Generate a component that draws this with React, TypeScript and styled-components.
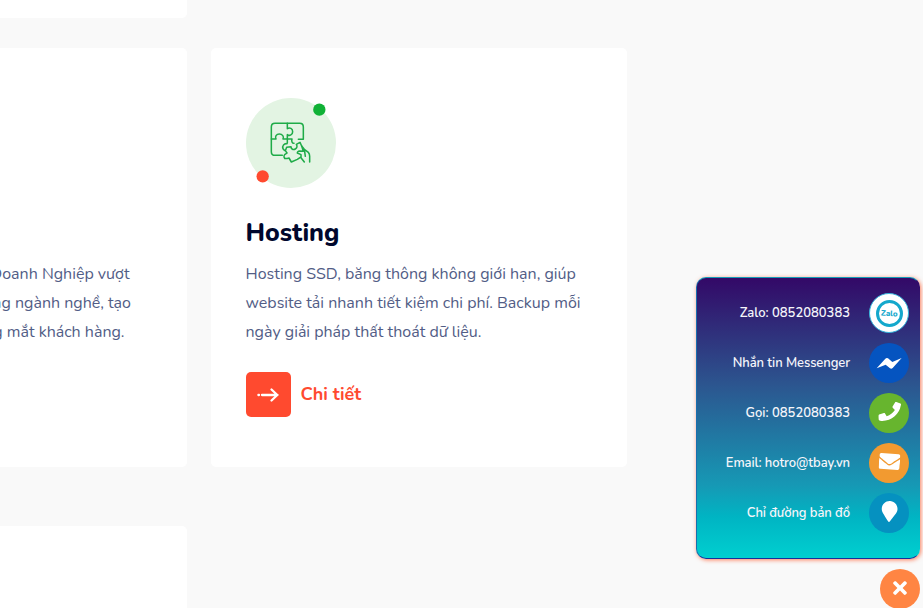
import React from "react";
import styled, { createGlobalStyle } from "styled-components";
import { FaEnvelope, FaMapMarker, FaPhone, FaTimes } from "react-icons/fa";

const GlobalStyle = createGlobalStyle`
  * { box-sizing: border-box; }
  body {
    margin: 0;
    background: #f9f9f9;
    font-family: "Nunito", "Open Sans", sans-serif;
  }
  h3, p { margin: 0; }
`;

const Page = styled.div`
  position: relative;
  display: flex;
  gap: 24px;
  height: 608px;
  overflow: hidden;
  background: #f9f9f9;
`;

const Column = styled.div`
  display: flex;
  flex-direction: column;
  flex: none;
`;

const Card = styled.article<{ $height: number; $width?: number; $mt?: number; $corners?: string }>`
  flex: none;
  width: ${(p) => p.$width ?? 187}px;
  height: ${(p) => p.$height}px;
  margin-top: ${(p) => p.$mt ?? 0}px;
  border-radius: ${(p) => p.$corners ?? "0 5px 5px 0"};
  background: #fff;
`;

const ServiceCard = styled(Card)`
  padding: 50px 35px 0;
`;

const CutOffCard = styled(Card)`
  display: flex;
  flex-direction: column;
  padding-top: 212px;
  overflow: hidden;
`;

const Badge = styled.svg`
  display: block;
  width: 90px;
  height: 90px;
`;

const Title = styled.h3`
  margin: 29px 0 0 -0.5px;
  font-size: 25px;
  font-weight: 800;
  line-height: 32px;
  color: #00072d;
`;

const Description = styled.p`
  margin: 11px 0 0 -0.5px;
  font-size: 16px;
  line-height: 29px;
  white-space: nowrap;
  color: #525d86;
`;

const TrailingLine = styled.p<{ $end: number }>`
  display: flex;
  justify-content: flex-end;
  width: ${(p) => p.$end}px;
  font-size: 16px;
  line-height: 29px;
  white-space: nowrap;
  color: #525d86;
`;

const DetailLink = styled.a`
  display: flex;
  align-items: center;
  gap: 9.5px;
  margin-top: 25px;
  font-size: 18px;
  font-weight: 700;
  line-height: 24px;
  color: #ff4a2f;
`;

const DetailLabel = styled.span`
  padding-bottom: 2px;
`;

const ArrowBox = styled.span`
  display: grid;
  place-items: center;
  width: 45px;
  height: 45px;
  border-radius: 5px;
  background: #ff4a2f;
`;

const ContactPanel = styled.aside`
  position: absolute;
  top: 277px;
  right: 3px;
  display: flex;
  flex-direction: column;
  gap: 10px;
  width: 224px;
  height: 282px;
  padding: 15px 10px 0 0;
  border: 1px solid transparent;
  border-radius: 10px;
  background: linear-gradient(to top, #00d0d0 0%, #00b4c3 15%, #1699b5 26%, #2c558f 62%, #330867 100%) border-box;
  border-top-color: #159bb8;
  border-left-color: #1a6fae;
  border-bottom-color: #17309a;
  box-shadow: 1px 1px 4px rgba(255, 95, 50, 0.8);
`;

const ContactRow = styled.a<{ $tracking?: number }>`
  display: flex;
  align-items: center;
  justify-content: flex-end;
  gap: 19px;
  height: 40px;
  font-size: 13px;
  font-weight: 600;
  letter-spacing: ${(p) => p.$tracking ?? 0}px;
  white-space: nowrap;
  color: #f5f5fa;
`;

const IconDisc = styled.span<{ $color: string; $tilt?: number; $size?: number; $lift?: number }>`
  display: grid;
  place-items: center;
  flex: none;
  width: 40px;
  height: 40px;
  border-radius: 50%;
  color: #fff;
  background: ${(p) => p.$color};

  > svg {
    width: ${(p) => p.$size ?? 40}px;
    height: ${(p) => p.$size ?? 40}px;
    transform: translateY(${(p) => -(p.$lift ?? 0)}px) rotate(${(p) => p.$tilt ?? 0}deg);
  }
`;

const ZaloDisc = styled.span`
  display: grid;
  place-items: center;
  flex: none;
  width: 40px;
  height: 40px;
  border: 1px solid #35b5dc;
  border-radius: 50%;
  background: #fff;
`;

const ZaloRing = styled.span`
  display: grid;
  place-items: center;
  width: 27px;
  height: 27px;
  border: 3px solid #14a8cc;
  border-radius: 50%;
  font-size: 8px;
  font-weight: 800;
  letter-spacing: 0;
  line-height: 10px;
  color: #14a8cc;
`;

const ZaloWord = styled.span`
  padding-top: 1px;
  transform: rotate(4deg);
`;

const CloseButton = styled.button`
  position: absolute;
  top: 569px;
  right: 3px;
  display: grid;
  place-items: center;
  width: 40px;
  height: 40px;
  padding: 0 0 2px;
  border: 0;
  border-radius: 50%;
  font-size: 20px;
  color: #fff;
  background: #ff8543;
`;

function PuzzleBadge() {
  return (
    <Badge viewBox="30 30 270 270">
      <circle cx="165" cy="165" r="135" fill="#e3f4e3" />
      <g fill="none" stroke="#1fab48" strokeWidth="4.6" strokeLinejoin="round" strokeLinecap="round">
        <path d="M139 202H117Q106 202 106 191V117Q106 106 117 106H191Q202 106 202 117V154H187" />
        <path d="M154 106V122C161 117 170 122 170 131C170 140 161 145 154 140V153H141C145 146 139 138 130 138C121 138 116 146 120 153H106" />
        <path d="M154 153H168C166 159 168 166 174 166M154 153V165" />
        <path d="M153 167C144 166 138 173 141 182L145 187M146 211C142 206 144 199 150 197L153 195L148 188L152 178L165 176C165 183 172 187 178 183C184 180 184 174 181 169L192 163L197 174" />
        <path d="M146 211C150 213 155 211 159 210L166 222L184 214L193 208" />
        <path d="M197 174L205 184L217 193Q221 197 221 205V222M197 174L202 190L191 189Q184 190 184 195L195 200V209L205 222M205 184L208 205" />
      </g>
      <circle cx="250" cy="65" r="18.5" fill="#10b136" />
      <circle cx="80" cy="265" r="18.5" fill="#ff4a2f" />
    </Badge>
  );
}

function Arrow() {
  return (
    <svg width="24" height="16" viewBox="0 0 24 16" fill="none" stroke="#fff" strokeWidth="2.3" strokeLinecap="round" strokeLinejoin="round">
      <path d="M5 8H20.5M14.5 2.5L20.3 8L14.5 13.5" />
      <path d="M1.4 8H2" />
    </svg>
  );
}

function MessengerBolt() {
  return (
    <svg viewBox="27 174 120 120" fill="currentColor">
      <path d="M50 250L76 221Q80 217 84 220L97 231L125 219L98 249Q94 253 90 250L77 239Z" />
    </svg>
  );
}

export default function App() {
  return (
    <>
      <GlobalStyle />
      <Page>
        <Column>
          <Card $height={18} $corners="0 0 5px 0" />
          <CutOffCard $height={419} $mt={30}>
            <TrailingLine $end={129.5}>Doanh Nghiệp vượt</TrailingLine>
            <TrailingLine $end={131}>ng ngành nghề, tạo</TrailingLine>
            <TrailingLine $end={124.5}>g mắt khách hàng.</TrailingLine>
          </CutOffCard>
          <Card $height={90} $mt={59} $corners="0 5px 0 0" />
        </Column>
        <Column>
          <ServiceCard $height={419} $width={416} $mt={48} $corners="5px">
            <PuzzleBadge />
            <Title>Hosting</Title>
            <Description>
              Hosting SSD, băng thông không giới hạn, giúp
              <br />
              website tải nhanh tiết kiệm chi phí. Backup mỗi
              <br />
              ngày giải pháp thất thoát dữ liệu.
            </Description>
            <DetailLink>
              <ArrowBox>
                <Arrow />
              </ArrowBox>
              <DetailLabel>Chi tiết</DetailLabel>
            </DetailLink>
          </ServiceCard>
        </Column>
        <ContactPanel>
          <ContactRow>
            Zalo: 0852080383
            <ZaloDisc>
              <ZaloRing>
                <ZaloWord>Zalo</ZaloWord>
              </ZaloRing>
            </ZaloDisc>
          </ContactRow>
          <ContactRow $tracking={-0.08}>
            Nhắn tin Messenger
            <IconDisc $color="#0554c0">
              <MessengerBolt />
            </IconDisc>
          </ContactRow>
          <ContactRow>
            Gọi: 0852080383
            <IconDisc $color="#67b52e" $tilt={8} $size={21} $lift={2}>
              <FaPhone />
            </IconDisc>
          </ContactRow>
          <ContactRow $tracking={-0.08}>
            Email: hotro@tbay.vn
            <IconDisc $color="#f29a30" $tilt={4} $size={21} $lift={2}>
              <FaEnvelope />
            </IconDisc>
          </ContactRow>
          <ContactRow $tracking={-0.08}>
            Chỉ đường bản đồ
            <IconDisc $color="#0591c0" $tilt={3} $size={21} $lift={2}>
              <FaMapMarker />
            </IconDisc>
          </ContactRow>
        </ContactPanel>
        <CloseButton aria-label="Close">
          <FaTimes />
        </CloseButton>
      </Page>
    </>
  );
}
